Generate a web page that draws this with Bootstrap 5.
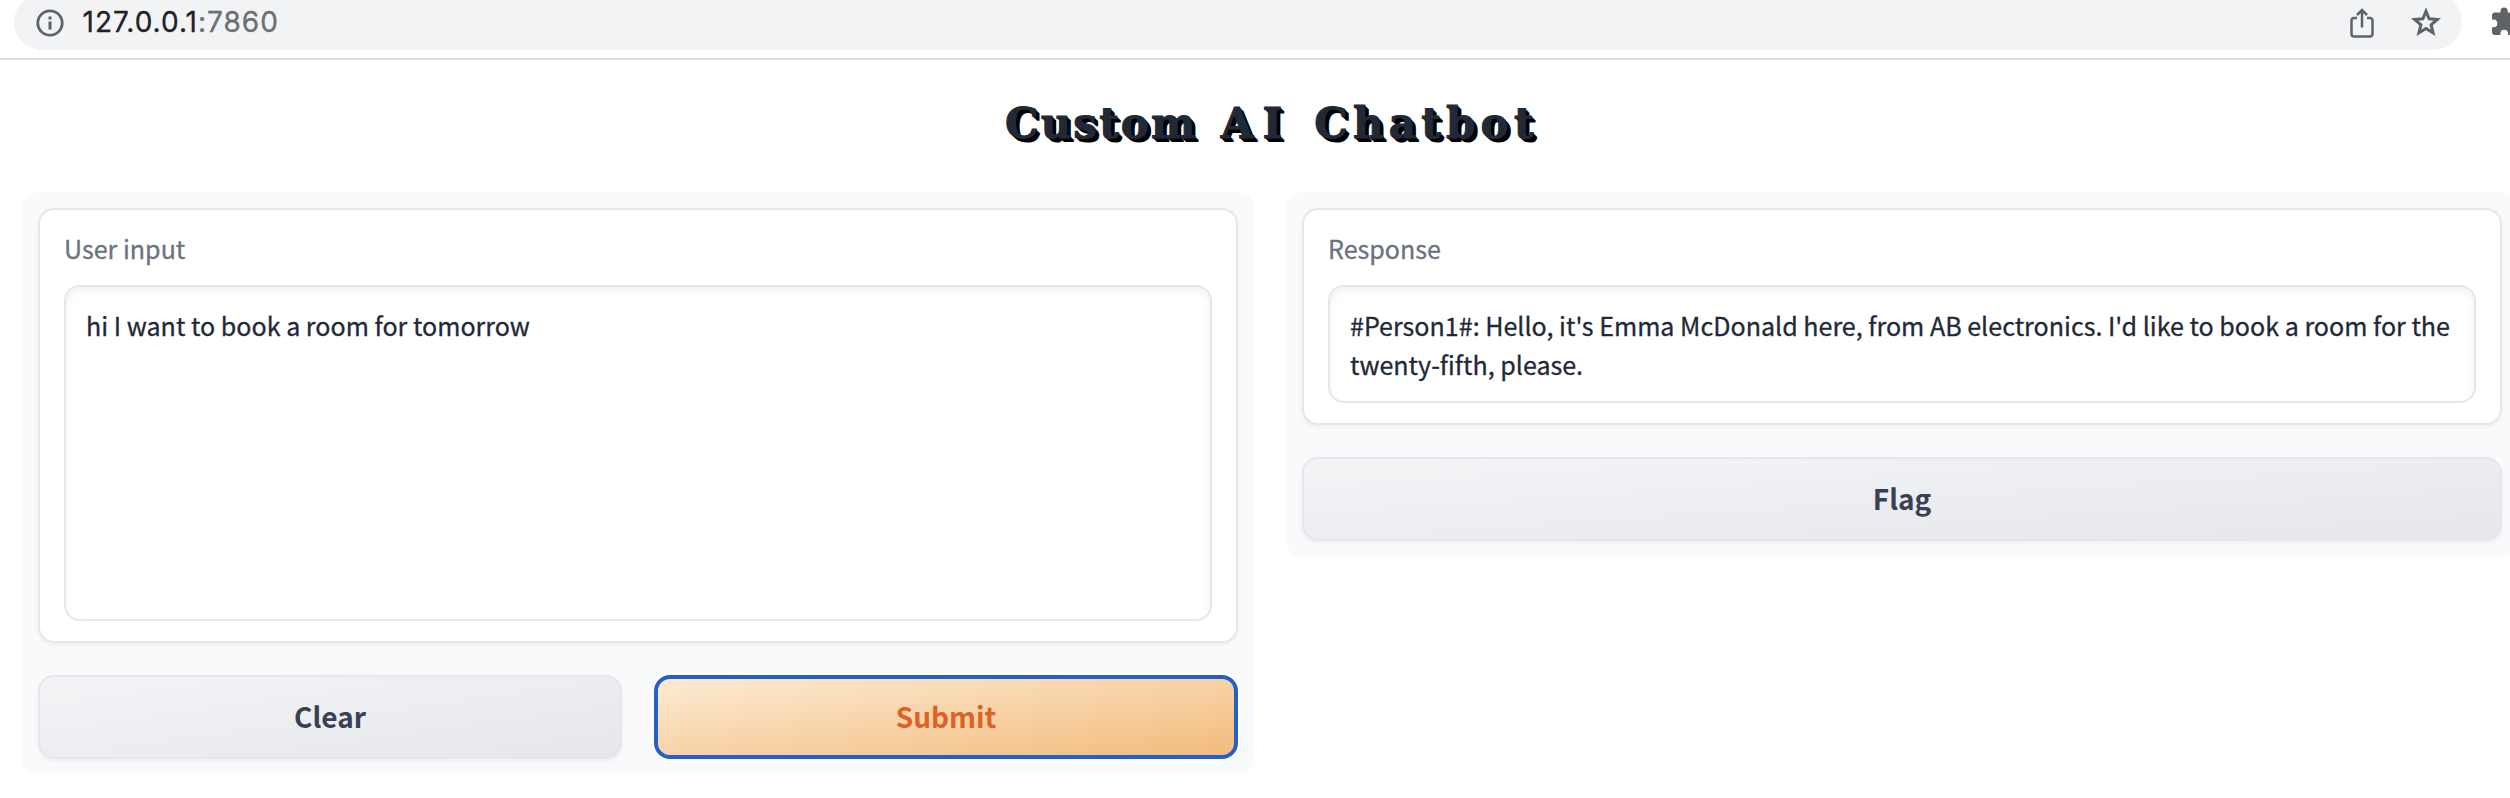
<!DOCTYPE html>
<html lang="en">
<head>
<meta charset="utf-8">
<title>Custom AI Chatbot</title>
<link href="https://cdn.jsdelivr.net/npm/bootstrap@5.3.0/dist/css/bootstrap.min.css" rel="stylesheet">
<style>
  body { font-family: "Noto Sans CJK SC", "Open Sans", sans-serif; font-size: 25.07px; line-height: 39.2px; color: #1f2937; overflow: hidden; background: #fff; }
  .toolbar { height: 60px; border-bottom: 2px solid #dadce0; padding-left: 14px; }
  .omnibox { width: 2448px; height: 56px; margin-top: -6px; padding: 0 20px 0 21px; background: #f1f3f4; border-radius: 28px; }
  .address { font: 28px/32px Inter, Roboto, sans-serif; color: #202124; margin-left: 17.500px; letter-spacing: 1px; -webkit-text-stroke: .3px; }
  .address .port { color: #6b6e72; }
  .title { height: 132px; padding: 37px 0 0 1005px; margin: 0; font: bold 42px/54px "DejaVu Serif", serif; color: #1f2937; text-shadow: 1px 1px #000, 2px 2px #000, 3px 3px #000, 4px 4px #000; white-space: pre; word-spacing: 8.5px; -webkit-text-stroke: 1px #1f2937; }
  .title .w1 { letter-spacing: 2.2px; }
  .title .w2 { letter-spacing: 9px; }
  .title .w3 { letter-spacing: 5.3px; }
  .board { padding-left: 22px; gap: 32px; width: 2518px; }
  .panel { width: 1232px; padding: 16px; background: #f9fafb; border-radius: 16px; gap: 32px; }
  .block { border: 2px solid #e5e7eb; border-radius: 16px; padding: 19px 24px 20px; box-shadow: 0 2px 4px rgba(0,0,0,.05); background: #fff; }
  .caption { display: block; color: #6b7280; margin-bottom: 17px; -webkit-text-stroke: .3px; }
  .field { border: 2px solid #e5e7eb; border-radius: 16px; padding: 19px 20px 16px; box-shadow: inset 0 4px 8px rgba(0,0,0,.05); color: #1f2937; background: #fff; font: inherit; resize: none; display: block; width: 100%; overflow: hidden; -webkit-text-stroke: .3px; }
  .action { height: 84px; border: 2px solid #e5e7eb; border-radius: 16px; padding: 0 0 2px; font-size: 28px; font-weight: 700; color: #374151; background: linear-gradient(to bottom right, #f3f4f6, #e5e7eb); box-shadow: 0 2px 4px rgba(0,0,0,.05); }
  .action.go { color: #dc6228; border: 4px solid #275fc8; background: linear-gradient(to bottom right, #fdebd3, #f2bb7c) padding-box; box-shadow: 0 0 0 2px #fff; }
</style>
</head>
<body>
<header class="toolbar d-flex align-items-start">
  <div class="omnibox d-flex flex-shrink-0 align-items-center">
    <svg width="30" height="30" viewBox="0 0 30 30" fill="none" stroke="#5f6368" style="margin-top:1px"><circle cx="15" cy="15" r="12.2" stroke-width="2.8"/><path d="M15 13.500v8M15 8.500v3" stroke-width="3"/></svg>
    <div class="address">127.0.0.1<span class="port">:7860</span></div>
    <div class="ms-auto d-flex align-items-center">
      <svg width="26" height="32" viewBox="0 0 26 32" fill="none" stroke="#5f6368" stroke-width="2.5" style="margin-right:36px"><path d="M8 12H5a2.500 2.500 0 0 0-2.500 2.500V28a2.500 2.500 0 0 0 2.500 2.500h16A2.500 2.500 0 0 0 23.500 28V14.500A2.500 2.500 0 0 0 21 12h-3M13 21.500V4.500M8 9l5-5 5 5"/></svg>
      <svg width="30" height="30" viewBox="0 0 30 30" fill="none" stroke="#5f6368" stroke-width="3" style="margin-right:1px"><path d="M15 4.200l3.100 7.600 8.300.6-6.300 5.400 2 8.100-7.100-4.400-7.100 4.400 2-8.100-6.300-5.400 8.300-.6z"/></svg>
    </div>
  </div>
  <svg class="flex-shrink-0" style="margin:7px 0 0 30px" width="30" height="30" viewBox="0 0 30 30" fill="#5f6368"><path d="M3 5.500H8.500V4a3.600 3.600 0 0 1 7.200 0v1.500H21a3 3 0 0 1 3 3V14h1.500a3.600 3.600 0 0 1 0 7.200H24V25a3 3 0 0 1-3 3h-5v-1.500a3.800 3.800 0 0 0-7.600 0V28H3a3 3 0 0 1-3-3v-4.800h1.500a3.800 3.800 0 0 0 0-7.600H0V8.500a3 3 0 0 1 3-3z"/></svg>
</header>
<main>
  <h1 class="title"><span class="w1">Custom</span> <span class="w2">AI</span> <span class="w3">Chatbot</span></h1>
  <div class="board d-flex align-items-start">
    <section class="panel d-flex flex-column flex-shrink-0">
      <div class="block">
        <label class="caption" for="ask">User input</label>
        <textarea class="field" id="ask" style="height:336px">hi I want to book a room for tomorrow</textarea>
      </div>
      <div class="d-flex" style="gap:32px">
        <button class="btn action flex-fill w-50">Clear</button>
        <button class="btn action go flex-fill w-50">Submit</button>
      </div>
    </section>
    <section class="panel d-flex flex-column flex-shrink-0">
      <div class="block">
        <label class="caption" for="reply">Response</label>
        <textarea class="field" id="reply" style="height:118px">#Person1#: Hello, it's Emma McDonald here, from AB electronics. I'd like to book a room for the twenty-fifth, please.</textarea>
      </div>
      <button class="btn action w-100">Flag</button>
    </section>
  </div>
</main>
<script src="https://cdn.jsdelivr.net/npm/bootstrap@5.3.0/dist/js/bootstrap.bundle.min.js"></script>
</body>
</html>
